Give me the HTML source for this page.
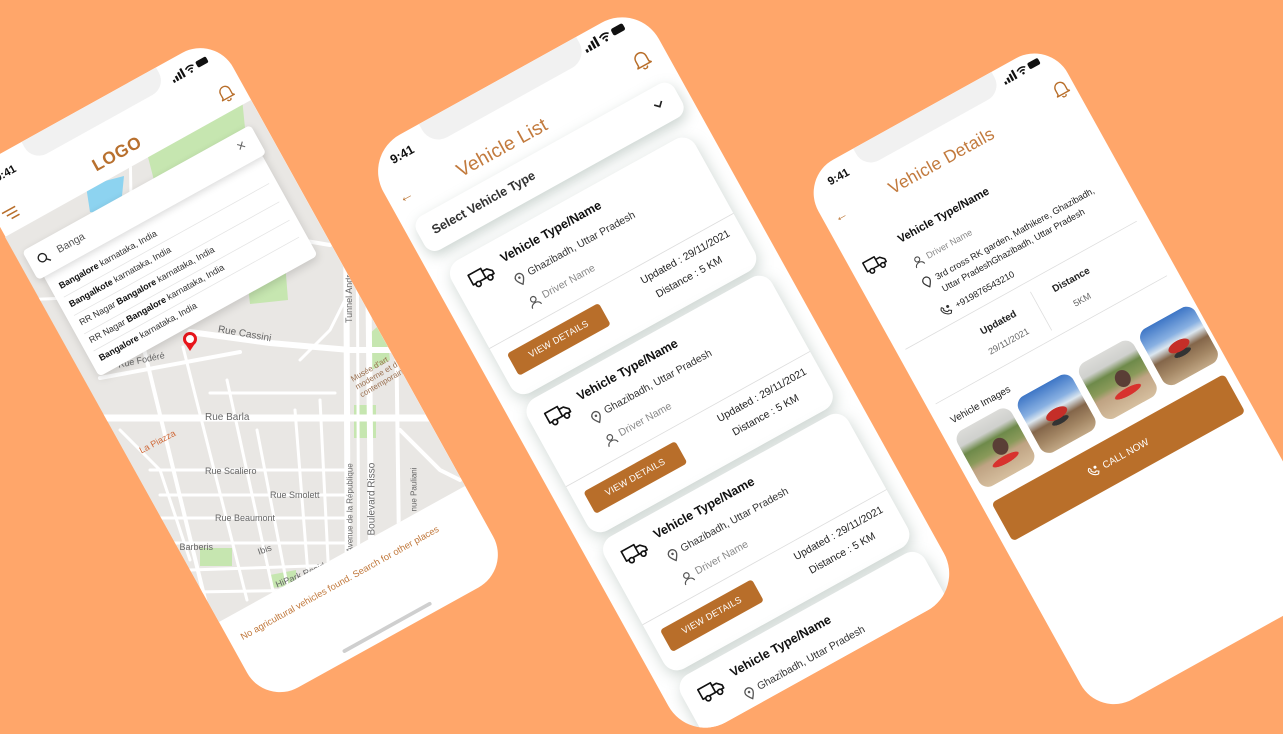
<!DOCTYPE html>
<html><head><meta charset="utf-8"><style>
*{box-sizing:border-box;margin:0;padding:0}
html,body{width:1283px;height:734px;overflow:hidden;background:#FFA66A;font-family:"Liberation Sans",Arial,sans-serif}
#wrap{position:relative;width:1283px;height:734px;overflow:hidden}
.ph{position:absolute;width:375px;background:#fff;border-radius:50px;transform-origin:0 0;overflow:hidden}
.ov{position:absolute;width:375px;transform-origin:0 0}
.abs{position:absolute}
.notch{position:absolute;top:0;height:30px;background:#F1F1F1;border-radius:0 0 22px 22px}
.time{position:absolute;font-size:15px;font-weight:bold;color:#111}
.title{position:absolute;font-size:23px;color:#C27A3D;letter-spacing:.3px}
.arrow{position:absolute;color:#B86E2A;font-size:18px;font-weight:bold}
.card{position:absolute;left:20px;width:332px;height:180px;background:#fff;border-radius:18px;box-shadow:0 6px 18px rgba(140,160,150,.45)}
.card .nm{position:absolute;left:64px;top:16px;font-size:15px;font-weight:bold;color:#111}
.card .loc{position:absolute;left:84px;top:47px;font-size:12.5px;color:#333}
.card .drv{position:absolute;left:86px;top:79px;font-size:12.5px;color:#888}
.card .div{position:absolute;left:0;right:0;top:110px;height:1px;background:#ddd}
.card .btn{position:absolute;left:15px;top:126px;width:125px;height:30px;background:#B86E2A;border-radius:4px;color:#fff;font-size:11px;text-align:center;line-height:30px;letter-spacing:.3px}
.card .up{position:absolute;left:197px;top:121px;font-size:12.5px;color:#222}
.card .ds{position:absolute;left:205px;top:144px;font-size:12.5px;color:#222}
.sug{position:absolute;left:12px;font-size:12px;color:#333;white-space:nowrap}
.sug b{color:#111}
.ml{position:absolute;font-size:9px;color:#666;white-space:nowrap;transform-origin:0 50%}
.img{position:absolute;top:393px;width:82px;height:84px;border-radius:14px}
.t1{background:radial-gradient(ellipse 38% 10% at 55% 74%,#d8322e 60%,transparent 64%),radial-gradient(ellipse 20% 22% at 58% 52%,#5a3e36 60%,transparent 64%),linear-gradient(#dcdcd9 0,#cfd0cd 22%,#6e8a4a 36%,#8a9a5a 55%,#bfa383 66%,#d6bf9f 100%)}
.t2{background:radial-gradient(ellipse 30% 14% at 50% 50%,#c52e28 60%,transparent 64%),radial-gradient(ellipse 24% 8% at 50% 62%,#333 60%,transparent 64%),linear-gradient(#3e76c6 0,#88b0e2 30%,#dbe6ef 42%,#84664a 58%,#a48765 80%,#c2a886 100%)}
</style></head><body><div id="wrap">

<!-- LEFT PHONE base -->
<div class="ph" style="left:-31px;top:171px;height:815px;transform:rotate(-29deg) scale(.75)">
  <div class="notch" style="left:80px;width:205px"></div>
  <div class="time" style="left:26px;top:18px">9:41</div>
  <svg class="abs" style="left:296px;top:16px" width="56" height="16" viewBox="0 0 56 16"><rect x="0" y="10" width="3" height="4" fill="#111"/><rect x="5" y="7" width="3" height="7" fill="#111"/><rect x="10" y="4" width="3" height="10" fill="#111"/><rect x="15" y="1" width="3" height="13" fill="#111"/><path d="M22 6a9 9 0 0 1 12 0M24.5 9a5 5 0 0 1 7 0" stroke="#111" stroke-width="2" fill="none"/><circle cx="28" cy="12" r="1.6" fill="#111"/><rect x="38" y="3" width="16" height="9" rx="2.5" fill="#111"/></svg>
  <svg class="abs" style="left:10px;top:68px" width="22" height="18" viewBox="0 0 22 18"><path d="M1 3h20M5 9h16M9 15h12" stroke="#B86E2A" stroke-width="2"/></svg>
  <div class="abs" style="left:148px;top:62px;font-size:23px;font-weight:bold;color:#B8702E;letter-spacing:1px">LOGO</div>
  <svg class="abs" style="left:339px;top:63px" width="22" height="24" viewBox="0 0 22 24"><path d="M4 17V10a7 7 0 0 1 14 0v7l2 2H2z M8.5 21a2.5 2.5 0 0 0 5 0" stroke="#B86E2A" stroke-width="1.8" fill="none" stroke-linejoin="round"/></svg>
  <div class="abs" style="left:16px;top:713px;font-size:12.5px;color:#C0773A;white-space:nowrap">No agricultural vehicles found. Search for other places</div>
  <div class="abs" style="left:125px;top:800px;width:135px;height:5px;border-radius:3px;background:#cfcfcf"></div>
</div>

<!-- LEFT MAP (screen coords) -->
<div class="abs" style="left:0;top:0;width:520px;height:734px;clip-path:polygon(5px 237px,251px 100px,465px 486px,219px 622px);background:#E9E7E4">
<svg width="520" height="734" viewBox="0 0 520 734">
  <g fill="#C6E6B0"><path d="M138 118 L242 98 L250 178 L158 196Z"/><path d="M246 268 L285 262 L288 300 L250 304Z"/><path d="M354 405 L376 405 L376 438 L354 438Z"/><path d="M368 335 L385 320 L390 360 L372 370Z"/><path d="M200 548 L232 548 L232 566 L200 566Z"/><path d="M270 575 L296 570 L296 585 L272 588Z"/></g>
  <path d="M86 186 L124 176 L120 216 L90 212Z" fill="#8DD3F0"/>
  <g stroke="#fff" fill="none" stroke-linecap="round">
    <path d="M60 418 L470 418" stroke-width="7"/>
    <path d="M190 332 L270 343 L350 350 L470 350" stroke-width="6"/>
    <path d="M100 378 L240 352" stroke-width="4"/>
    <path d="M346 200 L348 620" stroke-width="6"/>
    <path d="M357 200 L359 620" stroke-width="3"/>
    <path d="M368 250 L372 620" stroke-width="6"/>
    <path d="M396 320 L400 620" stroke-width="4"/>
    <path d="M130 140 L132 260" stroke-width="3"/>
    <path d="M40 270 L240 230 L330 245" stroke-width="4"/>
    <path d="M20 300 L140 295" stroke-width="3"/>
    <path d="M143 345 L210 620" stroke-width="4"/>
    <path d="M183 347 L247 600" stroke-width="3"/>
    <path d="M227 380 L275 600" stroke-width="3"/>
    <path d="M257 430 L290 600" stroke-width="3"/>
    <path d="M295 410 L310 600" stroke-width="3"/>
    <path d="M320 400 L330 600" stroke-width="3"/>
    <path d="M210 393 L335 393" stroke-width="3"/>
    <path d="M150 470 L345 470" stroke-width="3"/>
    <path d="M160 495 L352 495" stroke-width="3"/>
    <path d="M160 518 L345 518" stroke-width="3"/>
    <path d="M170 543 L345 543" stroke-width="3"/>
    <path d="M190 570 L340 565" stroke-width="3"/>
    <path d="M195 592 L320 590" stroke-width="3"/>
    <path d="M120 430 L160 470 L190 560" stroke-width="3"/>
    <path d="M400 430 L440 470 L460 480" stroke-width="4"/>
    <path d="M300 360 L330 330 L345 300" stroke-width="3"/>
  </g>
  <path d="M184 342 L190 351 L196 342Z" fill="#E8151B"/>
  <circle cx="190" cy="339" r="5.5" fill="#fff" stroke="#E8151B" stroke-width="3"/>
</svg>
<div class="ml" style="left:218px;top:324px;transform:rotate(10deg);font-size:10px">Rue Cassini</div>
<div class="ml" style="left:118px;top:360px;transform:rotate(-12deg)">Rue Fodéré</div>
<div class="ml" style="left:205px;top:412px;font-size:10px">Rue Barla</div>
<div class="ml" style="left:205px;top:466px">Rue Scaliero</div>
<div class="ml" style="left:270px;top:490px">Rue Smolett</div>
<div class="ml" style="left:215px;top:513px">Rue Beaumont</div>
<div class="ml" style="left:172px;top:542px">e Barberis</div>
<div class="ml" style="left:258px;top:547px;transform:rotate(-20deg)">Ibis</div>
<div class="ml" style="left:276px;top:580px;transform:rotate(-22deg)">HiPark Residence</div>
<div class="ml" style="left:140px;top:446px;transform:rotate(-28deg);color:#D06A3A">La Piazza</div>
<div class="ml" style="left:350px;top:548px;transform:rotate(-90deg);font-size:8px">Avenue de la République</div>
<div class="ml" style="left:372px;top:530px;transform:rotate(-90deg);font-size:10px">Boulevard Risso</div>
<div class="ml" style="left:414px;top:507px;transform:rotate(-90deg);font-size:8px">nue Pauliani</div>
<div class="ml" style="left:349px;top:318px;transform:rotate(-90deg);font-size:9px">Tunnel Andre</div>
<div class="ml" style="left:356px;top:374px;transform:rotate(-30deg);font-size:8px;color:#9A7050;line-height:9px">Musée d'art<br>moderne et d'a<br>contemporain de</div>
</div>

<!-- LEFT overlay (search) -->
<div class="ov" style="left:-31px;top:171px;height:815px;transform:rotate(-29deg) scale(.75)">
  <div class="abs" style="left:19px;top:168px;width:333px;height:156px;background:#fff;border-radius:6px;box-shadow:0 4px 12px rgba(0,0,0,.15)">
    <div class="sug" style="top:18px"><b>Bangalore</b> karnataka, India</div>
    <div class="abs" style="left:10px;right:10px;top:40px;height:1px;background:#e4e4e4"></div>
    <div class="sug" style="top:46px"><b>Bangalkote</b> karnataka, India</div>
    <div class="abs" style="left:10px;right:10px;top:68px;height:1px;background:#e4e4e4"></div>
    <div class="sug" style="top:74px">RR Nagar <b>Bangalore</b> karnataka, India</div>
    <div class="abs" style="left:10px;right:10px;top:96px;height:1px;background:#e4e4e4"></div>
    <div class="sug" style="top:101px">RR Nagar <b>Bangalore</b> karnataka, India</div>
    <div class="abs" style="left:10px;right:10px;top:122px;height:1px;background:#e4e4e4"></div>
    <div class="sug" style="top:128px"><b>Bangalore</b> karnataka, India</div>
  </div>
  <div class="abs" style="left:10px;top:128px;width:348px;height:44px;background:#fff;border-radius:6px;box-shadow:0 3px 10px rgba(0,0,0,.15)">
    <svg class="abs" style="left:12px;top:13px" width="18" height="18" viewBox="0 0 18 18"><circle cx="7.5" cy="7.5" r="5.5" stroke="#222" stroke-width="1.8" fill="none"/><path d="M11.5 11.5L16 16" stroke="#222" stroke-width="1.8"/></svg>
    <div class="abs" style="left:42px;top:13px;font-size:14px;color:#555">Banga</div>
    <div class="abs" style="left:318px;top:8px;font-size:20px;color:#666">×</div>
  </div>
</div>

<!-- RIGHT PHONE -->
<div class="ph" style="left:800px;top:178px;height:812px;transform:rotate(-29deg) scale(.76)">
  <div class="notch" style="left:80px;width:208px"></div>
  <div class="time" style="left:30px;top:15px">9:41</div>
  <svg class="abs" style="left:296px;top:10px" width="56" height="16" viewBox="0 0 56 16"><rect x="0" y="10" width="3" height="4" fill="#111"/><rect x="5" y="7" width="3" height="7" fill="#111"/><rect x="10" y="4" width="3" height="10" fill="#111"/><rect x="15" y="1" width="3" height="13" fill="#111"/><path d="M22 6a9 9 0 0 1 12 0M24.5 9a5 5 0 0 1 7 0" stroke="#111" stroke-width="2" fill="none"/><circle cx="28" cy="12" r="1.6" fill="#111"/><rect x="38" y="3" width="16" height="9" rx="2.5" fill="#111"/></svg>
  <svg class="abs" style="left:346px;top:52px" width="22" height="24" viewBox="0 0 22 24"><path d="M4 17V10a7 7 0 0 1 14 0v7l2 2H2z M8.5 21a2.5 2.5 0 0 0 5 0" stroke="#B86E2A" stroke-width="1.8" fill="none" stroke-linejoin="round"/></svg>
  <div class="arrow" style="left:14px;top:59px">←</div>
  <div class="title" style="left:96px;top:57px">Vehicle Details</div>
  <svg class="abs" style="left:16px;top:134px" width="32" height="24" viewBox="0 0 32 24"><path d="M2 4h17v13H2z M19 8h6l5 5v4H19z" stroke="#111" stroke-width="2" fill="none" stroke-linejoin="round"/><circle cx="8" cy="19" r="3" fill="#fff" stroke="#111" stroke-width="2"/><circle cx="24" cy="19" r="3" fill="#fff" stroke="#111" stroke-width="2"/></svg>
  <div class="abs" style="left:74px;top:126px;font-size:15px;font-weight:bold;color:#111">Vehicle Type/Name</div>
  <svg class="abs" style="left:76px;top:164px" width="14" height="15" viewBox="0 0 14 15"><circle cx="7" cy="4.5" r="3.3" stroke="#444" stroke-width="1.4" fill="none"/><path d="M1 14a6 5 0 0 1 12 0" stroke="#444" stroke-width="1.4" fill="none"/></svg>
  <div class="abs" style="left:96px;top:164px;font-size:12px;color:#888">Driver Name</div>
  <svg class="abs" style="left:74px;top:193px" width="12" height="16" viewBox="0 0 12 16"><path d="M6 15C2 10 1 8 1 6a5 5 0 0 1 10 0c0 2-1 4-5 9z" stroke="#333" stroke-width="1.6" fill="none"/></svg>
  <div class="abs" style="left:93px;top:192px;font-size:12px;color:#222;line-height:18px;white-space:nowrap">3rd cross RK garden, Mathikere, Ghazibadh,<br>Uttar PradeshGhazibadh, Uttar Pradesh</div>
  <svg class="abs" style="left:76px;top:239px" width="16" height="15" viewBox="0 0 16 15"><path d="M2 3c0 5 5 10 10 10l2-3-3-2-2 1c-2-1-3-2-4-4l1-2-2-3z" stroke="#333" stroke-width="1.4" fill="none"/><circle cx="12" cy="3" r="2" fill="#333"/></svg>
  <div class="abs" style="left:98px;top:239px;font-size:12px;color:#222">+919876543210</div>
  <div class="abs" style="left:12px;top:264px;width:348px;height:1px;background:#ddd"></div>
  <div class="abs" style="left:106px;top:285px;width:60px;text-align:center;font-size:13px;font-weight:bold;color:#222">Updated</div>
  <div class="abs" style="left:96px;top:314px;width:80px;text-align:center;font-size:12px;color:#666">29/11/2021</div>
  <div class="abs" style="left:192px;top:278px;width:1px;height:58px;background:#ddd"></div>
  <div class="abs" style="left:215px;top:282px;width:64px;text-align:center;font-size:13px;font-weight:bold;color:#222">Distance</div>
  <div class="abs" style="left:215px;top:313px;width:64px;text-align:center;font-size:12px;color:#666">5KM</div>
  <div class="abs" style="left:12px;top:346px;width:348px;height:1px;background:#ddd"></div>
  <div class="abs" style="left:19px;top:368px;font-size:13px;color:#222">Vehicle Images</div>
  <div class="img t1" style="left:12px"></div>
  <div class="img t2" style="left:104px"></div>
  <div class="img t1" style="left:196px"></div>
  <div class="img t2" style="left:288px"></div>
  <div class="abs" style="left:13px;top:496px;width:350px;height:58px;background:#B96F2A;border-radius:6px;color:#fff;font-size:13px;text-align:center;line-height:58px">
    <svg style="vertical-align:middle;margin-right:6px" width="16" height="15" viewBox="0 0 16 15"><path d="M2 3c0 5 5 10 10 10l2-3-3-2-2 1c-2-1-3-2-4-4l1-2-2-3z" stroke="#fff" stroke-width="1.4" fill="none"/><circle cx="12" cy="3" r="2" fill="#fff"/></svg>CALL NOW</div>
</div>

<!-- MIDDLE PHONE -->
<div class="ph" style="left:363px;top:155px;height:800px;transform:rotate(-29deg) scale(.84)">
  <div class="notch" style="left:76px;width:214px"></div>
  <div class="time" style="left:26px;top:14px">9:41</div>
  <svg class="abs" style="left:292px;top:9px" width="56" height="16" viewBox="0 0 56 16"><rect x="0" y="10" width="3" height="4" fill="#111"/><rect x="5" y="7" width="3" height="7" fill="#111"/><rect x="10" y="4" width="3" height="10" fill="#111"/><rect x="15" y="1" width="3" height="13" fill="#111"/><path d="M22 6a9 9 0 0 1 12 0M24.5 9a5 5 0 0 1 7 0" stroke="#111" stroke-width="2" fill="none"/><circle cx="28" cy="12" r="1.6" fill="#111"/><rect x="38" y="3" width="16" height="9" rx="2.5" fill="#111"/></svg>
  <svg class="abs" style="left:334px;top:50px" width="22" height="24" viewBox="0 0 22 24"><path d="M4 17V10a7 7 0 0 1 14 0v7l2 2H2z M8.5 21a2.5 2.5 0 0 0 5 0" stroke="#B86E2A" stroke-width="1.8" fill="none" stroke-linejoin="round"/></svg>
  <div class="arrow" style="left:12px;top:57px">←</div>
  <div class="title" style="left:89px;top:59px">Vehicle List</div>
  <div class="abs" style="left:12px;top:97px;width:351px;height:46px;background:#fff;border-radius:14px;box-shadow:0 6px 16px rgba(140,160,150,.45)">
    <div class="abs" style="left:17px;top:14px;font-size:15px;font-weight:bold;color:#333">Select Vehicle Type</div>
    <svg class="abs" style="left:318px;top:17px" width="14" height="10" viewBox="0 0 14 10"><path d="M2 2l5 5 5-5" stroke="#222" stroke-width="2" fill="none"/></svg>
  </div>
  <div class="card" style="top:164px">
    <svg class="abs" style="left:18px;top:18px" width="32" height="24" viewBox="0 0 32 24"><path d="M2 4h17v13H2z M19 8h6l5 5v4H19z" stroke="#111" stroke-width="2" fill="none" stroke-linejoin="round"/><circle cx="8" cy="19" r="3" fill="#fff" stroke="#111" stroke-width="2"/><circle cx="24" cy="19" r="3" fill="#fff" stroke="#111" stroke-width="2"/></svg>
    <div class="nm">Vehicle Type/Name</div>
    <svg class="abs" style="left:66px;top:48px" width="12" height="16" viewBox="0 0 12 16"><path d="M6 15C2 10 1 8 1 6a5 5 0 0 1 10 0c0 2-1 4-5 9z" stroke="#555" stroke-width="1.6" fill="none"/><circle cx="6" cy="6" r="1.5" fill="#555"/></svg>
    <div class="loc">Ghazibadh, Uttar Pradesh</div>
    <svg class="abs" style="left:67px;top:80px" width="14" height="15" viewBox="0 0 14 15"><circle cx="7" cy="4.5" r="3.3" stroke="#555" stroke-width="1.4" fill="none"/><path d="M1 14a6 5 0 0 1 12 0" stroke="#555" stroke-width="1.4" fill="none"/></svg>
    <div class="drv">Driver Name</div>
    <div class="div"></div>
    <div class="btn">VIEW DETAILS</div>
    <div class="up">Updated : 29/11/2021</div>
    <div class="ds">Distance : 5 KM</div>
  </div>
  <div class="card" style="top:352px">
    <svg class="abs" style="left:18px;top:18px" width="32" height="24" viewBox="0 0 32 24"><path d="M2 4h17v13H2z M19 8h6l5 5v4H19z" stroke="#111" stroke-width="2" fill="none" stroke-linejoin="round"/><circle cx="8" cy="19" r="3" fill="#fff" stroke="#111" stroke-width="2"/><circle cx="24" cy="19" r="3" fill="#fff" stroke="#111" stroke-width="2"/></svg>
    <div class="nm">Vehicle Type/Name</div>
    <svg class="abs" style="left:66px;top:48px" width="12" height="16" viewBox="0 0 12 16"><path d="M6 15C2 10 1 8 1 6a5 5 0 0 1 10 0c0 2-1 4-5 9z" stroke="#555" stroke-width="1.6" fill="none"/><circle cx="6" cy="6" r="1.5" fill="#555"/></svg>
    <div class="loc">Ghazibadh, Uttar Pradesh</div>
    <svg class="abs" style="left:67px;top:80px" width="14" height="15" viewBox="0 0 14 15"><circle cx="7" cy="4.5" r="3.3" stroke="#555" stroke-width="1.4" fill="none"/><path d="M1 14a6 5 0 0 1 12 0" stroke="#555" stroke-width="1.4" fill="none"/></svg>
    <div class="drv">Driver Name</div>
    <div class="div"></div>
    <div class="btn">VIEW DETAILS</div>
    <div class="up">Updated : 29/11/2021</div>
    <div class="ds">Distance : 5 KM</div>
  </div>
  <div class="card" style="top:540px">
    <svg class="abs" style="left:18px;top:18px" width="32" height="24" viewBox="0 0 32 24"><path d="M2 4h17v13H2z M19 8h6l5 5v4H19z" stroke="#111" stroke-width="2" fill="none" stroke-linejoin="round"/><circle cx="8" cy="19" r="3" fill="#fff" stroke="#111" stroke-width="2"/><circle cx="24" cy="19" r="3" fill="#fff" stroke="#111" stroke-width="2"/></svg>
    <div class="nm">Vehicle Type/Name</div>
    <svg class="abs" style="left:66px;top:48px" width="12" height="16" viewBox="0 0 12 16"><path d="M6 15C2 10 1 8 1 6a5 5 0 0 1 10 0c0 2-1 4-5 9z" stroke="#555" stroke-width="1.6" fill="none"/><circle cx="6" cy="6" r="1.5" fill="#555"/></svg>
    <div class="loc">Ghazibadh, Uttar Pradesh</div>
    <svg class="abs" style="left:67px;top:80px" width="14" height="15" viewBox="0 0 14 15"><circle cx="7" cy="4.5" r="3.3" stroke="#555" stroke-width="1.4" fill="none"/><path d="M1 14a6 5 0 0 1 12 0" stroke="#555" stroke-width="1.4" fill="none"/></svg>
    <div class="drv">Driver Name</div>
    <div class="div"></div>
    <div class="btn">VIEW DETAILS</div>
    <div class="up">Updated : 29/11/2021</div>
    <div class="ds">Distance : 5 KM</div>
  </div>
  <div class="card" style="top:728px">
    <svg class="abs" style="left:18px;top:18px" width="32" height="24" viewBox="0 0 32 24"><path d="M2 4h17v13H2z M19 8h6l5 5v4H19z" stroke="#111" stroke-width="2" fill="none" stroke-linejoin="round"/><circle cx="8" cy="19" r="3" fill="#fff" stroke="#111" stroke-width="2"/><circle cx="24" cy="19" r="3" fill="#fff" stroke="#111" stroke-width="2"/></svg>
    <div class="nm">Vehicle Type/Name</div>
    <svg class="abs" style="left:66px;top:48px" width="12" height="16" viewBox="0 0 12 16"><path d="M6 15C2 10 1 8 1 6a5 5 0 0 1 10 0c0 2-1 4-5 9z" stroke="#555" stroke-width="1.6" fill="none"/><circle cx="6" cy="6" r="1.5" fill="#555"/></svg>
    <div class="loc">Ghazibadh, Uttar Pradesh</div>
    <div class="drv">Driver Name</div>
  </div>
</div>

</div></body></html>
